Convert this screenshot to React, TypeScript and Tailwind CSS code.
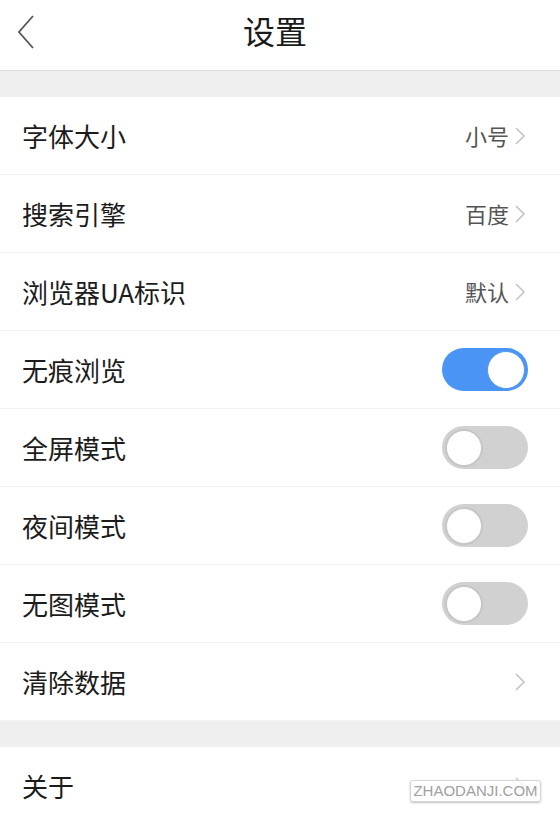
import { useState } from "react"

const FONT = '"Noto Sans CJK SC", "Noto Sans", sans-serif'

function Chevron() {
  return (
    <svg width="12" height="20" viewBox="0 0 12 20" className="ml-[5px]">
      <path d="M2 2 L10 10 L2 18" fill="none" stroke="#c4c4c4" strokeWidth="1.6" />
    </svg>
  )
}

function Toggle({ on, onClick }: { on: boolean; onClick: () => void }) {
  return (
    <button
      onClick={onClick}
      className={`relative w-[86px] h-[43px] rounded-full flex items-center px-[3px] ${
        on ? "bg-[#4a94f5] justify-end" : "bg-[#d1d1d1] justify-start"
      }`}
    >
      <span
        className={`block w-[38px] h-[38px] rounded-full bg-white ${
          on ? "border border-[#5a9ae8]" : "border-2 border-[#c6c6c6]"
        }`}
      />
    </button>
  )
}

function Row({ label, children }: { label: string; children?: React.ReactNode }) {
  return (
    <div className="h-[78px] flex items-center justify-between pl-[22px] pr-[34px] bg-white border-b border-[#f3f3f3]">
      <span className="text-[26px] text-[#1c1c1c]">{label}</span>
      <div className="flex items-center">{children}</div>
    </div>
  )
}

function Value({ text }: { text: string }) {
  return (
    <>
      <span className="text-[22px] text-[#555555]">{text}</span>
      <Chevron />
    </>
  )
}

export default function App() {
  const [toggles, setToggles] = useState({ incognito: true, full: false, night: false, noimg: false })
  const flip = (k: keyof typeof toggles) => setToggles((t) => ({ ...t, [k]: !t[k] }))

  return (
    <div className="relative w-[560px] h-[817px] overflow-hidden bg-white" style={{ fontFamily: FONT }}>
      {/* Header */}
      <div className="relative h-[71px] flex items-center justify-center pr-[10px] pb-[10px] border-b border-[#dcdcdc]">
        <svg width="20" height="36" viewBox="0 0 20 36" className="absolute left-[16px] top-[14px]">
          <path d="M17 2 L3 18 L17 34" fill="none" stroke="#555555" strokeWidth="1.8" />
        </svg>
        <span className="text-[32px] leading-none text-[#1a1a1a]">设置</span>
      </div>

      <div className="h-[26px] bg-[#efefef]" />

      <Row label="字体大小"><Value text="小号" /></Row>
      <Row label="搜索引擎"><Value text="百度" /></Row>
      <Row label="浏览器UA标识"><Value text="默认" /></Row>
      <Row label="无痕浏览">
        <div className="-mr-[2px]"><Toggle on={toggles.incognito} onClick={() => flip("incognito")} /></div>
      </Row>
      <Row label="全屏模式">
        <div className="-mr-[2px]"><Toggle on={toggles.full} onClick={() => flip("full")} /></div>
      </Row>
      <Row label="夜间模式">
        <div className="-mr-[2px]"><Toggle on={toggles.night} onClick={() => flip("night")} /></div>
      </Row>
      <Row label="无图模式">
        <div className="-mr-[2px]"><Toggle on={toggles.noimg} onClick={() => flip("noimg")} /></div>
      </Row>
      <Row label="清除数据"><Chevron /></Row>

      <div className="h-[26px] bg-[#efefef]" />

      <Row label="关于"><Chevron /></Row>

      {/* watermark */}
      <div className="absolute left-[410px] top-[780px] w-[131px] h-[22px] bg-white/85 border border-[#d4d4d4] rounded-[3px] shadow-[0_1px_2px_rgba(0,0,0,0.25)] flex items-center justify-center">
        <span className="text-[15px] text-[#a0a0a0]" style={{ fontFamily: '"Liberation Sans", sans-serif' }}>
          ZHAODANJI.COM
        </span>
      </div>
    </div>
  )
}
